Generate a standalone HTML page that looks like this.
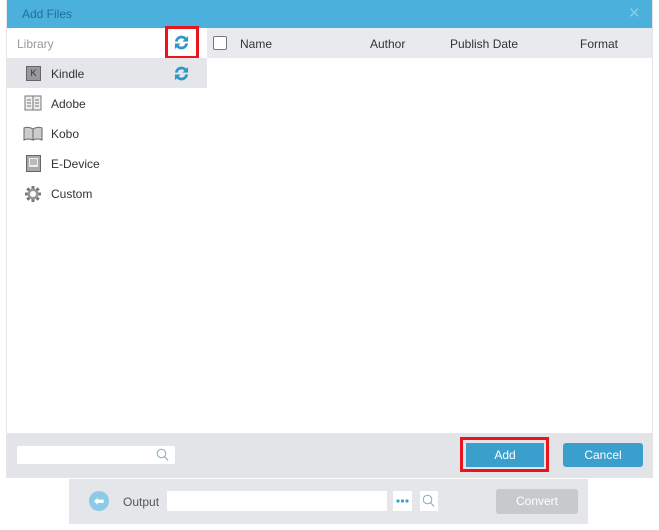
<!DOCTYPE html>
<html><head><style>
*{margin:0;padding:0;box-sizing:border-box}
body{width:659px;height:530px;background:#fff;font-family:"Liberation Sans",sans-serif;position:relative;overflow:hidden;font-size:12px;color:#333}
.a{position:absolute}
</style></head><body>
<div class="a" style="left:6px;top:0;width:647px;height:478px;background:#fff;border-left:1px solid #e6e6e6;border-right:1px solid #e6e6e6"></div>
<div class="a" style="left:7px;top:0;width:645px;height:28px;background:#4bb0db"></div>
<div class="a" style="left:22px;top:7px;font-size:12px;color:#1f6fa0">Add Files</div>
<div class="a" style="left:628px;top:4px;font-size:15px;color:#8cc9e6">✕</div>
<div class="a" style="left:17px;top:37px;color:#999">Library</div>
<div class="a" style="left:165px;top:26px;width:34px;height:33px;border:3px solid #e8141e"></div>
<svg class="a" style="left:174px;top:35px" width="15" height="15" viewBox="0 0 16 16"><path d="M2.5 7A5.5 5.5 0 0 1 12.5 4.5" stroke="#2f98c9" stroke-width="3" fill="none"/><path d="M15 1v6h-6z" fill="#2f98c9"/><path d="M13.5 9A5.5 5.5 0 0 1 3.5 11.5" stroke="#2f98c9" stroke-width="3" fill="none"/><path d="M1 15v-6h6z" fill="#2f98c9"/></svg>
<div class="a" style="left:207px;top:28px;width:445px;height:30px;background:#e8eaee"></div>
<div class="a" style="left:213px;top:36px;width:14px;height:14px;border:1px solid #777;border-radius:2px;background:#fff"></div>
<div class="a" style="left:240px;top:37px">Name</div>
<div class="a" style="left:370px;top:37px">Author</div>
<div class="a" style="left:450px;top:37px">Publish Date</div>
<div class="a" style="left:580px;top:37px">Format</div>
<div class="a" style="left:7px;top:58px;width:200px;height:30px;background:#e5e6ea"></div>
<svg class="a" style="left:174px;top:66px" width="15" height="15" viewBox="0 0 16 16"><path d="M2.5 7A5.5 5.5 0 0 1 12.5 4.5" stroke="#2f98c9" stroke-width="3" fill="none"/><path d="M15 1v6h-6z" fill="#2f98c9"/><path d="M13.5 9A5.5 5.5 0 0 1 3.5 11.5" stroke="#2f98c9" stroke-width="3" fill="none"/><path d="M1 15v-6h6z" fill="#2f98c9"/></svg>
<div class="a" style="left:26px;top:66px;width:15px;height:15px;background:#999;border:1px solid #666;font-size:9px;color:#333;text-align:center;line-height:13px">K</div>
<div class="a" style="left:51px;top:67px;font-size:12px">Kindle</div>
<svg class="a" style="left:24px;top:95px" width="18" height="16"><rect x="1" y="1" width="16" height="14" fill="#eee" stroke="#777"/><line x1="9" y1="1" x2="9" y2="15" stroke="#777"/><path d="M3 5h4M3 8h4M3 11h4M11 5h4M11 8h4M11 11h4" stroke="#777"/></svg>
<div class="a" style="left:51px;top:97px">Adobe</div>
<svg class="a" style="left:23px;top:126px" width="20" height="15"><path d="M1 2q4-2 9 1q5-3 9-1v12q-4-2-9 0q-5-2-9 0z" fill="#ccc" stroke="#666"/><line x1="10" y1="3" x2="10" y2="14" stroke="#666"/></svg>
<div class="a" style="left:51px;top:127px">Kobo</div>
<svg class="a" style="left:26px;top:155px" width="15" height="17"><rect x="0.5" y="0.5" width="14" height="16" fill="#aaa" stroke="#666"/><rect x="3" y="3" width="9" height="9" fill="#eee"/><path d="M4 5h7M4 7h7M4 9h7" stroke="#888"/></svg>
<div class="a" style="left:51px;top:157px">E-Device</div>
<svg class="a" style="left:24px;top:185px" width="18" height="18" viewBox="0 0 18 18"><g stroke="#777" stroke-width="3"><path d="M9 1v16M1 9h16M3.3 3.3l11.4 11.4M14.7 3.3L3.3 14.7"/></g><circle cx="9" cy="9" r="5.5" fill="#999"/><circle cx="9" cy="9" r="3" fill="#fff"/></svg>
<div class="a" style="left:51px;top:187px">Custom</div>
<div class="a" style="left:7px;top:433px;width:645px;height:45px;background:#e3e4e8"></div>
<div class="a" style="left:17px;top:446px;width:158px;height:18px;background:#fff;border-radius:2px"></div>
<svg class="a" style="left:156px;top:448px" width="13" height="14"><circle cx="5.5" cy="5.5" r="4.3" fill="none" stroke="#8ab" stroke-width="1"/><path d="M8.5 8.5l3.5 4" stroke="#8ab"/></svg>
<div class="a" style="left:460px;top:437px;width:89px;height:35px;border:3px solid #e8141e"></div>
<div class="a" style="left:466px;top:443px;width:78px;height:24px;background:#3a9fcd;color:#fff;text-align:center;line-height:24px">Add</div>
<div class="a" style="left:563px;top:443px;width:80px;height:24px;background:#3a9fcd;color:#fff;text-align:center;line-height:24px;border-radius:3px">Cancel</div>
<div class="a" style="left:69px;top:479px;width:519px;height:45px;background:#e5e6e9"></div>
<div class="a" style="left:89px;top:491px;width:20px;height:20px;border-radius:50%;background:#8ccbe5;color:#fff;text-align:center;line-height:20px;font-size:12px;font-weight:bold">⬅</div>
<div class="a" style="left:123px;top:495px;color:#555">Output</div>
<div class="a" style="left:167px;top:491px;width:220px;height:20px;background:#fff"></div>
<svg class="a" style="left:393px;top:491px" width="19" height="20"><rect width="19" height="20" fill="#fff"/><circle cx="5" cy="10" r="1.6" fill="#3a9fcd"/><circle cx="9.5" cy="10" r="1.6" fill="#3a9fcd"/><circle cx="14" cy="10" r="1.6" fill="#3a9fcd"/></svg>
<div class="a" style="left:420px;top:491px;width:18px;height:20px;background:#fff"></div>
<svg class="a" style="left:422px;top:494px" width="13" height="14"><circle cx="5.5" cy="5.5" r="4.3" fill="none" stroke="#8ab"/><path d="M8.5 8.5l3.5 4" stroke="#8ab"/></svg>
<div class="a" style="left:496px;top:489px;width:82px;height:25px;background:#c8c9cc;color:#fff;text-align:center;line-height:25px;border-radius:3px">Convert</div>
</body></html>
